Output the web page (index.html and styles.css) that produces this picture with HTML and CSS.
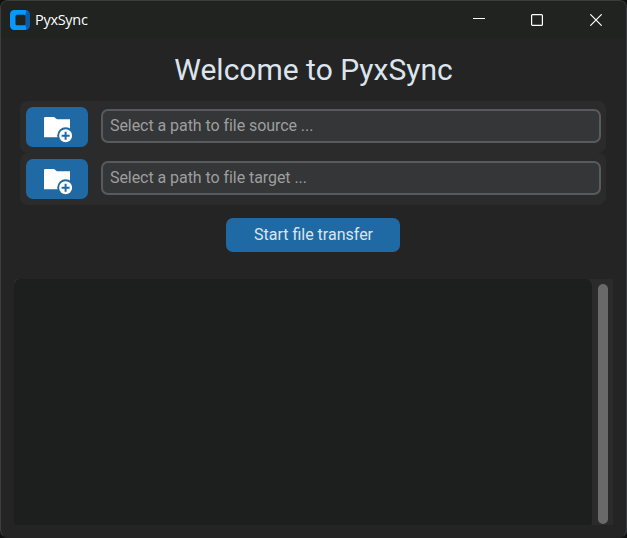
FILE: index.html
```html
<!DOCTYPE html>
<html lang="en">
<head>
<meta charset="utf-8">
<title>PyxSync</title>
<link rel="stylesheet" href="styles.css">
</head>
<body>
<div class="window">
  <header class="titlebar">
    <svg class="logo" width="20" height="20" viewBox="0 0 20 20">
      <rect width="20" height="20" rx="4.500" fill="#075da5"/>
      <path d="M4.500 0H15.500l1 1.500-1.500 3.500v10l1.500 3.500-1 1.500H4.500A4.500 4.500 0 0 1 0 15.500v-11A4.500 4.500 0 0 1 4.500 0z" fill="#0599ff"/>
      <rect x="5.500" y="4.800" width="9.800" height="10.400" rx="1.500" fill="#20231f"/>
    </svg>
    <span class="app-name">PyxSync</span>
    <div class="controls">
      <svg width="12" height="12" viewBox="0 0 12 12"><path d="M0 4.500h12" stroke="#fff"/></svg>
      <svg width="12" height="12" viewBox="0 0 12 12"><rect x=".6" y=".6" width="10.800" height="10.800" rx="1" fill="none" stroke="#fff" stroke-width="1.200"/></svg>
      <svg width="12" height="12" viewBox="0 0 12 12"><path d="M.3.300l11.400 11.400M11.700.300L.3 11.700" stroke="#fff" stroke-width="1.200"/></svg>
    </div>
  </header>
  <main class="content">
    <h1 class="title">Welcome to PyxSync</h1>
    <div class="path-row">
      <button class="browse" aria-label="Select source">
        <svg width="30" height="28" viewBox="0 0 30 28"><path d="M1 2.300Q1 1 2.200 1H11l3 2.200h13v18H1z" fill="#fff"/><circle cx="22.600" cy="19.700" r="8.400" fill="#1f6aa5"/><circle cx="22.600" cy="19.700" r="6.500" fill="#fff"/><path d="M18.600 19.700h8M22.600 15.700v8" stroke="#1f6aa5" stroke-width="2"/></svg>
      </button>
      <input class="entry" type="text" placeholder="Select a path to file source ...">
    </div>
    <div class="path-row">
      <button class="browse" aria-label="Select target">
        <svg width="30" height="28" viewBox="0 0 30 28"><path d="M1 2.300Q1 1 2.200 1H11l3 2.200h13v18H1z" fill="#fff"/><circle cx="22.600" cy="19.700" r="8.400" fill="#1f6aa5"/><circle cx="22.600" cy="19.700" r="6.500" fill="#fff"/><path d="M18.600 19.700h8M22.600 15.700v8" stroke="#1f6aa5" stroke-width="2"/></svg>
      </button>
      <input class="entry" type="text" placeholder="Select a path to file target ...">
    </div>
    <button class="start">Start file transfer</button>
    <section class="log">
      <div class="log-text"></div>
      <div class="scroll-thumb"></div>
    </section>
  </main>
</div>
</body>
</html>
```
FILE: styles.css
```css
* { box-sizing: border-box; }
body { margin: 0; background: #111; font-family: Roboto, sans-serif; }
.window {
  width: 627px;
  height: 538px;
  border: 1px solid #3b3d3e;
  border-bottom-color: #242424;
  border-radius: 8px;
  background: #242424;
  overflow: hidden;
}
.titlebar {
  display: flex;
  align-items: center;
  height: 37px;
  padding: 0 24px 0 9px;
  background: #20231f;
}
.app-name {
  margin-left: 5px;
  color: #fff;
  font: 14.500px/20px "Open Sans", sans-serif;
  letter-spacing: -0.300px;
}
.controls { display: flex; gap: 47px; margin-left: auto; }
.controls svg { display: block; }
.controls svg:first-child { margin-right: -1px; }
.content { display: flex; flex-direction: column; padding: 0 13px; }
.title {
  height: 63px;
  margin: 0;
  padding-top: 12px;
  color: #dce4ee;
  font-size: 30px;
  font-weight: 400;
  line-height: 40px;
  text-align: center;
}
.path-row {
  display: flex;
  align-items: flex-start;
  gap: 13px;
  height: 52px;
  margin: 0 7px 0 6px;
  padding: 6px 5px 0 6px;
  border-radius: 8px;
  background: #2b2b2b;
}
.browse {
  display: flex;
  width: 62px;
  height: 40px;
  padding: 9px 0 0 17px;
  border: 0;
  border-radius: 7px;
  background: #1f6aa5;
}
.entry {
  flex: 1;
  height: 34px;
  min-width: 0;
  margin: 2px 0 0;
  padding: 0 7px 1px;
  border: 2px solid #565b5e;
  border-radius: 7px;
  background: #343638;
  color: #dce4ee;
  font: 16px/20px Roboto, sans-serif;
  letter-spacing: -0.060px;
}
.entry::placeholder { color: #9e9e9e; opacity: 1; }
.start {
  align-self: flex-start;
  width: 174px;
  height: 34px;
  margin: 13px 0 27px 212px;
  padding: 0 0 0 1px;
  border: 0;
  border-radius: 7px;
  background: #1f6aa5;
  color: #dce4ee;
  font: 16px/20px Roboto, sans-serif;
}
.log {
  display: flex;
  gap: 6px;
  width: 599px;
  height: 246px;
  border-radius: 2px 0 0 2px;
  background: #2b2b2b;
}
.log-text { width: 578px; border-radius: 7px 7px 2px 2px; background: #1d1e1e; }
.scroll-thumb { width: 10px; height: 240px; margin-top: 5px; border-radius: 5px; background: #696969; }
```
